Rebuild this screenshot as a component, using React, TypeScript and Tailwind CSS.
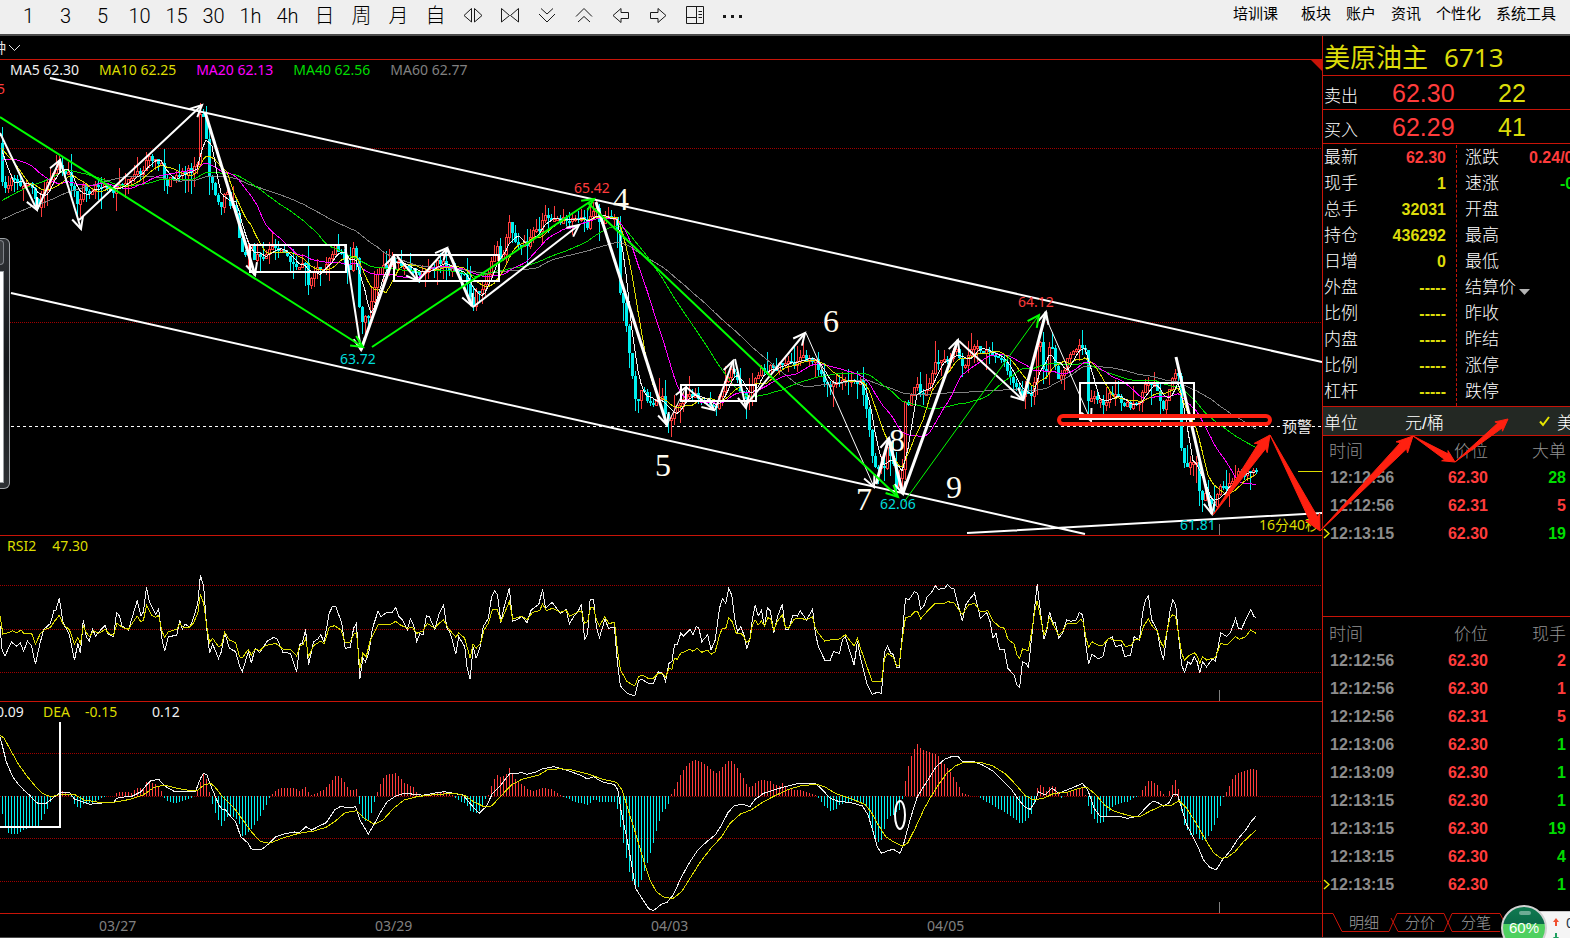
import type { ReactNode } from "react";

type Point = [number, number];

/* ================= DATA ================= */
const PERIODS = ["1", "3", "5", "10", "15", "30", "1h", "4h", "日", "周", "月", "自"];
const MENU = ["板块", "账户", "资讯", "个性化", "系统工具"];

const QUOTE_LEFT = [
  { label: "最新", value: "62.30", color: "text-[#ff3c3c]" },
  { label: "现手", value: "1", color: "text-[#dcdc0a]" },
  { label: "总手", value: "32031", color: "text-[#dcdc0a]" },
  { label: "持仓", value: "436292", color: "text-[#dcdc0a]" },
  { label: "日增", value: "0", color: "text-[#dcdc0a]" },
  { label: "外盘", value: "-----", color: "text-[#dcdc0a]" },
  { label: "比例", value: "-----", color: "text-[#dcdc0a]" },
  { label: "内盘", value: "-----", color: "text-[#dcdc0a]" },
  { label: "比例", value: "-----", color: "text-[#dcdc0a]" },
  { label: "杠杆", value: "-----", color: "text-[#dcdc0a]" },
];

const QUOTE_RIGHT = ["涨跌", "速涨", "开盘", "最高", "最低", "结算价", "昨收", "昨结", "涨停", "跌停"];

const BIG_ORDERS = [
  { time: "12:12:56", price: "62.30", volume: "28", up: false },
  { time: "12:12:56", price: "62.31", volume: "5", up: true },
  { time: "12:13:15", price: "62.30", volume: "19", up: false },
];

const TICKS = [
  { time: "12:12:56", price: "62.30", volume: "2", up: true },
  { time: "12:12:56", price: "62.30", volume: "1", up: true },
  { time: "12:12:56", price: "62.31", volume: "5", up: true },
  { time: "12:13:06", price: "62.30", volume: "1", up: false },
  { time: "12:13:09", price: "62.30", volume: "1", up: false },
  { time: "12:13:15", price: "62.30", volume: "1", up: false },
  { time: "12:13:15", price: "62.30", volume: "19", up: false },
  { time: "12:13:15", price: "62.30", volume: "4", up: false },
  { time: "12:13:15", price: "62.30", volume: "1", up: false },
];

// turning points of the close, in chart coordinates
const CLOSES =
  "-180,268 -90,240 -60,235 -50,180 -20,145 0,143 2,183 5,188 10,181 14,176 17,182 24,185 30,182 35,198 37,207 42,192 49,180 54,173 60,164 68,175 73,190 77,205 81,200 84,182 89,196 93,188 98,187 108,186 113,190 118,180 125,185 135,176 144,171 147,152 150,158 156,162 160,160 165,186 169,180 176,178 181,169 186,173 194,168 198,158 200,114 203,116 205,127 207,155 210,190 213,183 216,200 220,211 222,200 226,186 230,206 235,210 238,226 241,253 244,257 247,247 251,247 253,260 257,251 262,256 267,251 275,246 282,252 289,258 297,270 304,258 308,283 313,276 318,267 325,265 330,253 335,247 340,253 345,262 350,268 353,245 357,263 360,333 363,317 367,320 370,308 372,293 375,283 379,265 385,267 392,262 397,262 404,267 411,270 417,275 423,268 431,267 443,260 450,270 456,274 465,278 468,292 473,303 475,292 480,297 485,283 489,273 492,255 497,247 501,262 506,238 510,218 513,245 518,243 527,243 532,233 539,230 544,217 549,220 555,218 569,222 583,220 587,225 591,210 596,208 600,223 606,212 611,218 616,218 618,243 620,293 623,303 627,333 630,360 635,398 638,398 641,387 645,390 648,402 653,405 657,395 662,397 666,423 670,417 673,413 677,403 682,397 693,395 703,398 710,405 715,408 720,393 727,378 732,367 737,382 740,390 745,397 750,393 755,377 760,370 765,373 770,368 775,373 780,365 785,360 790,365 797,360 803,358 808,362 815,358 818,368 823,383 828,383 833,382 845,378 853,385 860,382 865,403 868,427 871,443 873,467 878,465 883,470 887,450 892,457 896,487 898,480 902,467 905,405 910,400 913,385 918,385 922,395 927,387 932,370 937,360 943,363 950,355 957,352 960,363 965,362 968,352 975,348 982,352 990,353 997,360 1005,365 1010,377 1017,387 1022,395 1027,392 1032,393 1035,373 1038,328 1042,353 1044,383 1050,343 1054,360 1058,378 1063,373 1068,355 1075,353 1080,347 1086,352 1088,403 1092,395 1097,403 1103,403 1112,393 1118,397 1125,405 1132,405 1140,402 1147,380 1157,388 1163,410 1170,387 1175,370 1179,375 1181,447 1185,468 1190,460 1197,460 1200,502 1206,493 1211,505 1216,503 1219,483 1226,487 1236,473 1243,478 1253,468 1256,471";

// indicator samples: each list is split in two halves, the second one starts at x = 650
const RSI_FAST = [
  "0,258 5,330 12,347 27,306 40,319 48,308 56,334 65,303 75,318 84,373 95,310 104,268 120,250 128,212 133,210 141,175 150,248 165,285 177,360 185,310 191,340 198,240 205,290 212,303 220,268 227,288 245,262 250,256 255,280 270,290 277,218 284,228 290,258 305,270 326,182 335,228 341,215 348,142 355,185 370,222 377,207 384,290 391,334 400,290 420,286 427,240 433,268 440,252 450,262 458,240 470,190 476,106 484,140 491,265 498,340 505,312 519,355 526,335 534,278 545,325 560,335 569,378 576,394 590,335 597,370 606,325 617,338 635,303 650,292 658,296 672,337 690,340 705,395 712,313 718,310 726,268 733,376 745,305 755,297 762,284 770,306 782,220 790,199 798,200 812,250 820,325 832,322 840,265 847,250 855,418 862,355 868,365 876,340 885,265 898,214 905,230 918,218 932,217 940,203 948,230 955,238 968,268 975,236 983,258 990,304 998,280 1005,285 1013,228 1020,230 1033,268 1043,222 1054,196 1062,265 1070,280 1083,342 1090,290 1104,320 1110,385 1117,418 1124,320 1131,354 1140,325 1148,260 1160,235 1168,170 1175,153 1182,165 1190,248 1197,205 1210,145 1218,243 1230,238 1240,228 1252,248 1262,210 1280,193 1289,148 1296,205 1312,187 1325,210 1332,220 1345,208 1353,252 1362,232 1375,210 1381,192 1389,300 1396,280 1402,180 1410,178 1417,260 1424,293 1437,238 1446,265 1460,262 1467,370 1474,438 1490,460 1508,468 1517,422 1525,418 1540,430",
  "0,430 8,430 20,395 30,400 37,425 45,370 52,365 58,315 65,313 73,280 80,288 95,268 102,284 110,260 116,264 123,305 137,284 145,330 155,300 165,205 172,175 180,190 187,145 194,165 202,240 208,275 216,260 223,285 230,325 237,300 243,240 250,195 257,228 265,210 272,262 279,203 286,212 294,278 303,230 314,193 322,268 329,268 340,225 350,228 357,213 372,240 386,207 393,280 400,320 415,360 428,360 436,335 450,340 457,300 464,290 485,375 493,303 500,355 515,430 528,463 540,457 550,460 557,335 564,318 572,340 578,343 586,382 592,383 600,275 607,175 615,180 628,155 636,160 643,208 650,200 658,172 670,155 678,138 685,148 700,145 707,133 715,145 722,145 735,210 742,244 750,195 757,182 771,160 785,235 800,218 808,245 815,295 822,280 830,327 842,330 850,385 865,405 872,435 878,443 885,365 893,370 899,382 906,300 914,200 920,133 928,220 936,298 943,270 949,215 957,250 963,247 971,295 980,280 990,240 1000,244 1013,240 1020,217 1028,225 1035,310 1042,372 1050,342 1065,357 1076,350 1085,300 1098,290 1106,320 1120,315 1128,350 1142,345 1150,290 1163,300 1170,220 1177,180 1184,167 1192,240 1205,270 1213,330 1220,360 1228,280 1235,215 1242,180 1249,195 1256,290 1263,375 1270,397 1278,365 1285,373 1293,350 1300,365 1306,400 1313,365 1322,380 1336,357 1343,363 1350,320 1356,278 1370,290 1380,275 1391,235 1398,265 1405,267 1415,240 1427,208 1435,230 1440,233",
];
const RSI_SLOW = [
  "0,228 7,282 20,278 30,272 40,278 50,270 58,282 75,280 84,313 95,283 104,270 120,262 128,246 141,226 150,252 165,270 177,312 185,293 191,310 198,258 206,280 213,290 222,272 235,280 250,268 258,280 270,286 278,250 290,262 305,268 326,228 335,246 341,240 348,196 360,225 370,232 377,225 384,270 391,292 400,275 420,268 427,250 437,264 450,262 460,248 470,220 476,163 484,190 491,260 498,308 505,295 519,320 526,315 534,277 545,300 560,308 569,350 576,353 590,328 597,345 606,327 617,332 630,317 655,310 672,327 690,328 705,348 712,318 720,314 726,295 733,350 745,317 762,303 770,312 782,262 795,257 810,270 820,307 832,306 840,283 847,278 855,385 862,340 870,350 880,300 898,254 930,252 940,244 950,254 968,265 980,262 990,280 1005,273 1015,250 1033,265 1043,250 1054,240 1065,265 1083,292 1090,278 1104,295 1117,355 1124,312 1131,325 1142,310 1150,270 1160,250 1170,208 1182,210 1190,245 1200,215 1210,185 1218,237 1240,228 1252,240 1265,217 1282,212 1289,192 1298,212 1312,205 1332,217 1345,210 1353,228 1381,212 1389,250 1396,245 1403,203 1410,203 1417,238 1424,258 1437,230 1446,250 1460,248 1467,330 1474,390 1490,425 1508,438 1517,410 1525,405 1540,415",
  "0,415 8,415 20,400 30,400 37,412 45,385 52,388 58,355 65,358 73,340 95,328 102,334 112,325 123,337 137,330 145,343 155,335 165,285 172,265 180,265 187,233 195,245 205,280 216,280 223,290 230,307 237,300 243,255 250,240 257,255 265,243 272,258 280,233 287,237 294,270 303,243 314,225 322,262 329,265 342,238 357,234 372,240 386,230 393,265 400,280 415,303 436,298 450,297 464,284 485,318 493,295 500,325 515,378 528,425 550,425 557,355 564,340 578,352 586,378 592,375 600,290 607,232 618,230 630,214 636,215 643,236 660,212 678,190 700,190 707,185 722,188 735,212 742,223 757,195 771,190 785,215 803,212 815,243 830,260 842,265 850,297 865,312 872,345 878,355 885,327 899,332 906,280 914,215 920,182 928,235 936,285 943,262 949,230 957,252 971,285 980,275 990,252 1013,250 1024,238 1030,248 1035,290 1042,322 1050,305 1065,316 1076,315 1090,295 1110,303 1120,302 1130,320 1143,316 1152,298 1163,300 1172,260 1184,237 1195,262 1205,272 1213,305 1220,322 1228,275 1235,235 1242,224 1249,230 1256,285 1263,340 1270,360 1280,347 1293,338 1300,348 1306,370 1313,350 1322,360 1336,355 1343,353 1350,330 1356,310 1370,315 1391,290 1400,298 1415,290 1427,270 1440,280",
];
const DIF = [
  "0,590 8,630 15,665 30,710 45,735 58,752 70,765 80,780 90,790 110,790 130,770 145,757 165,757 177,778 195,785 213,793 232,790 270,787 277,775 300,770 315,768 335,755 348,735 358,722 377,718 390,737 412,753 430,756 465,753 477,713 484,700 492,705 500,735 520,795 528,808 536,810 545,825 560,845 572,890 590,910 597,927 622,928 640,910 655,890 675,882 700,876 712,877 727,860 740,870 762,856 775,848 795,810 808,800 835,803 845,800 855,840 875,882 890,850 905,815 920,785 940,768 960,760 985,763 1005,766 1030,760 1055,755 1070,758 1100,765 1120,795 1138,820 1155,800 1170,760 1190,735 1210,702 1240,698 1253,703 1275,695 1290,686 1315,680 1345,690 1380,706 1395,717 1410,710 1430,725 1460,734 1468,750 1475,810 1490,900 1500,970 1510,1045 1525,1075 1540,1103",
  "0,1108 8,1112 30,1090 40,1088 55,1065 75,1010 95,965 115,928 135,905 155,885 170,855 185,818 200,797 220,793 237,800 250,778 270,760 300,748 320,740 350,731 393,730 410,750 428,775 450,785 475,787 505,798 518,825 530,875 540,920 550,940 565,932 578,928 594,940 603,910 620,830 635,770 650,740 665,710 680,680 700,658 720,648 732,650 743,665 770,665 790,675 815,693 835,718 858,747 875,778 890,800 903,808 915,785 923,755 938,765 955,745 972,760 990,750 1010,740 1027,730 1040,750 1055,805 1070,830 1090,830 1110,828 1135,835 1160,828 1180,800 1195,783 1205,787 1220,798 1233,788 1243,765 1253,763 1262,800 1275,855 1288,885 1300,915 1315,960 1330,982 1345,990 1360,960 1380,930 1395,900 1415,870 1428,845 1440,828",
];
const DEA = [
  "0,585 10,595 25,630 45,675 65,710 85,740 100,760 120,770 150,762 175,762 200,780 235,787 270,787 310,778 340,765 365,743 390,735 420,745 445,750 470,750 485,735 500,730 510,740 530,772 560,810 580,845 600,880 620,905 640,910 670,895 710,880 745,873 775,862 795,845 820,818 847,812 865,835 890,853 910,840 935,805 960,780 990,770 1030,764 1080,760 1105,767 1125,785 1150,800 1168,798 1190,768 1215,735 1240,718 1280,705 1300,690 1330,686 1360,690 1400,703 1430,717 1465,727 1478,750 1490,800 1510,880 1530,965 1540,1005",
  "0,1020 15,1055 35,1073 55,1075 75,1055 95,1015 120,965 145,925 170,890 190,850 215,822 240,810 270,785 300,765 330,748 360,737 395,733 415,740 440,760 475,775 510,793 525,815 540,850 560,890 580,907 600,918 612,910 630,865 650,810 665,775 685,735 705,700 725,678 745,667 785,667 815,678 845,702 870,735 890,765 910,780 935,775 960,760 990,757 1020,745 1038,742 1060,765 1080,795 1100,812 1125,822 1145,829 1165,829 1190,812 1215,798 1240,795 1257,782 1275,805 1300,855 1320,900 1340,940 1357,955 1372,952 1390,935 1410,905 1440,870",
];
const HISTOGRAM = [
  "0,769 5,825 13,862 20,882 40,883 56,868 75,862 90,858 98,840 105,820 115,800 122,775 130,769 141,758 150,751 160,760 168,768 172,785 182,800 191,803 198,792 213,790 227,785 240,775 250,769 270,769 277,757 300,757 312,758 326,742 341,745 348,722 362,728 377,740 384,757 390,775 400,787 420,789 440,780 455,774 465,765 470,745 477,718 483,700 490,720 497,760 503,790 512,825 526,860 535,835 545,828 560,835 569,855 576,895 583,885 597,865 610,845 620,822 630,800 640,770 650,757 662,744 700,745 712,755 726,738 735,765 750,760 770,748 782,730 797,705 812,715 825,742 835,752 847,748 854,800 860,835 868,845 876,842 885,805 892,770 900,740 912,708 925,702 940,700 950,712 960,730 980,740 990,758 1000,764 1020,762 1050,755 1070,762 1080,772 1090,782 1105,790 1118,815 1131,818 1140,810 1150,780 1160,765 1167,735 1175,715 1182,703 1190,715 1197,705 1203,700 1210,682 1218,702 1225,722 1240,732 1255,750 1270,752 1290,742 1310,748 1325,762 1335,770 1345,775 1365,785 1396,795 1410,777 1424,787 1440,785 1460,785 1467,810 1474,870 1481,915 1488,960 1495,1000 1502,1025 1510,1050 1517,1040 1524,1015 1532,985 1540,960",
  "0,940 8,905 15,870 23,835 30,810 40,805 47,770 58,745 65,722 73,700 87,675 100,663 110,660 130,672 145,690 158,700 172,680 187,662 194,663 202,675 215,700 230,735 237,745 250,727 265,720 285,723 295,735 305,738 314,730 325,745 345,750 365,752 380,760 393,765 400,775 415,800 428,812 440,808 450,795 470,785 485,783 500,785 513,800 522,850 530,890 543,907 550,900 557,860 565,830 578,825 586,815 594,808 600,770 607,715 614,672 621,645 628,625 635,612 642,625 657,635 680,642 693,665 707,685 722,715 735,742 742,760 757,766 780,769 790,780 810,792 825,805 850,822 865,835 878,852 893,842 906,820 914,785 920,740 928,733 942,755 949,737 963,740 970,762 978,777 990,755 1005,750 1020,745 1030,745 1035,775 1042,805 1050,830 1063,850 1076,845 1085,825 1098,800 1115,790 1135,785 1148,772 1163,768 1170,748 1184,722 1192,722 1205,737 1213,755 1222,768 1228,768 1235,745 1248,720 1256,755 1263,830 1270,860 1285,888 1300,882 1306,902 1315,900 1328,885 1342,850 1348,830 1356,790 1362,769 1370,752 1384,715 1391,702 1405,697 1415,692 1427,687 1441,690",
];

/* ================= HELPERS ================= */
const parse = (s: string): Point[] => s.split(" ").map((p) => p.split(",").map(Number) as Point);

const expand = (halves: string[]): Point[] =>
  halves.flatMap((half, i) =>
    parse(half).map(([x, y]) => [i * 650 + (x * 660) / 1568, 540 + y / 3] as Point)
  );

const toPoints = (list: Point[]) => list.map(([x, y]) => `${x.toFixed(1)},${y.toFixed(1)}`).join(" ");

function valueAt(list: Point[], x: number) {
  const i = list.findIndex((p) => p[0] >= x);
  if (i < 0) return list[list.length - 1][1];
  if (i === 0) return list[0][1];
  const [x0, y0] = list[i - 1];
  const [x1, y1] = list[i];
  return x1 === x0 ? y1 : y0 + ((y1 - y0) * (x - x0)) / (x1 - x0);
}

// small repeatable generator, so the wicks are the same on every render
let seed = 7;
const random = () => {
  seed = (seed * 16807) % 2147483647;
  return seed / 2147483647;
};

const STEP = 3;
const HISTORY = 60;
const BARS = 419;
const closeCurve = parse(CLOSES);
const closes = Array.from({ length: HISTORY + BARS }, (_, i) => {
  const x = (i - HISTORY) * STEP + 2;
  return valueAt(closeCurve, x) + (random() - 0.5) * 7;
});

const candles = Array.from({ length: BARS }, (_, i) => {
  const open = closes[i + HISTORY - 1];
  const close = closes[i + HISTORY];
  const top = Math.round(Math.min(open, close));
  const bottom = Math.max(top + 2, Math.round(Math.max(open, close)));
  const high = Math.round(top - random() * random() * 22);
  const low = Math.round(bottom + random() * random() * 24);
  return { x: i * STEP + 2, top, bottom, high, low, up: close < open };
});

const average = (n: number): Point[] =>
  Array.from({ length: BARS }, (_, i) => {
    const end = i + HISTORY + 1;
    const part = closes.slice(Math.max(0, end - n), end);
    return [i * STEP + 2, part.reduce((a, b) => a + b, 0) / part.length];
  });

const MA_LINES = [
  { n: 60, color: "#808080" },
  { n: 40, color: "#00dc00" },
  { n: 20, color: "#ff00ff" },
  { n: 10, color: "#dcdc00" },
  { n: 5, color: "#f0f0f0" },
].map((l) => ({ ...l, points: toPoints(average(l.n)) }));

const histogramCurve = expand(HISTOGRAM);
const histogram = Array.from({ length: BARS }, (_, i) => ({
  x: i * STEP + 2,
  y: Math.round(valueAt(histogramCurve, i * STEP + 2)),
}));

/* ================= CHART PARTS ================= */
function Grid({ rows }: { rows: number[] }) {
  return (
    <>
      {rows.map((y) => (
        <line key={y} x1="0" x2="1322" y1={y + 0.5} y2={y + 0.5} stroke="#a00000" strokeDasharray="1 1" />
      ))}
    </>
  );
}

function Arrow({ from, to, color = "#fff", width = 2 }: { from: Point; to: Point; color?: string; width?: number }) {
  const a = Math.atan2(to[1] - from[1], to[0] - from[0]);
  const wing = (d: number) => `${to[0] - 13 * Math.cos(a + d)},${to[1] - 13 * Math.sin(a + d)}`;
  return (
    <g fill="none" stroke={color}>
      <line x1={from[0]} y1={from[1]} x2={to[0]} y2={to[1]} strokeWidth={width} />
      <polyline points={`${wing(0.45)} ${to[0]},${to[1]} ${wing(-0.45)}`} strokeWidth="2" />
    </g>
  );
}

// tapered arrow: thin tail, thick neck, swept-back head
function BrushArrow({ from, to, size }: { from: Point; to: Point; size: number }) {
  const a = Math.atan2(to[1] - from[1], to[0] - from[0]);
  const at = (back: number, side: number) =>
    `${to[0] - back * Math.cos(a) - side * Math.sin(a)},${to[1] - back * Math.sin(a) + side * Math.cos(a)}`;
  return (
    <polygon
      fill="#ff2010"
      stroke="#ff2010"
      strokeLinejoin="round"
      points={`${from[0]},${from[1]} ${at(size * 1.7, size * 0.55)} ${at(size * 2, size)} ${at(0, 0)} ${at(size * 2, -size)} ${at(size * 1.7, -size * 0.55)}`}
    />
  );
}

const WHITE_ARROWS: [Point, Point, number][] = [
  [[0, 133], [37, 210], 2],
  [[37, 210], [60, 160], 2],
  [[60, 160], [81, 229], 2],
  [[79, 220], [202, 105], 2],
  [[205, 112], [255, 275], 3],
  [[345, 245], [361, 350], 2],
  [[361, 350], [394, 256], 3],
  [[397, 256], [418, 281], 2],
  [[418, 281], [447, 248], 2],
  [[447, 248], [472, 306], 3],
  [[473, 307], [579, 225], 2],
  [[596, 202], [667, 425], 3],
  [[667, 425], [686, 387], 1],
  [[686, 387], [714, 410], 2],
  [[715, 410], [733, 361], 2],
  [[735, 359], [746, 408], 2],
  [[746, 405], [805, 333], 2],
  [[806, 333], [874, 487], 1],
  [[876, 484], [889, 438], 3],
  [[889, 440], [903, 494], 3],
  [[903, 493], [958, 340], 3],
  [[959, 341], [1023, 400], 2],
  [[1023, 400], [1046, 312], 3],
  [[1046, 318], [1091, 421], 1],
  [[1176, 357], [1212, 514], 3],
];

const COUNTS: [string, number, number][] = [
  ["4", 613, 210],
  ["5", 655, 476],
  ["6", 823, 332],
  ["7", 856, 510],
  ["8", 889, 451],
  ["9", 946, 498],
];

function PriceChart() {
  return (
    <svg viewBox="0 80 1322 455" className="block w-full overflow-visible" role="img" aria-label="K线">
      <g shapeRendering="crispEdges">
        <Grid rows={[148, 322]} />
        <line x1="11" x2="1282" y1="426.5" y2="426.5" stroke="#fff" strokeDasharray="3 3" />
        <line x1="1312" x2="1322" y1="426.5" y2="426.5" stroke="#fff" strokeDasharray="3 3" />
        {candles.map((c) =>
          c.up ? (
            <g key={c.x} fill="none" stroke="#ff3c3c">
              <path d={`M${c.x + 0.5} ${c.high}V${c.top}M${c.x + 0.5} ${c.bottom}V${c.low}`} />
              <rect x={c.x - 0.5} y={c.top + 0.5} width="2" height={c.bottom - c.top} />
            </g>
          ) : (
            <g key={c.x} fill="#00f0f0">
              <rect x={c.x} y={c.high} width="1" height={c.low - c.high} />
              <rect x={c.x - 1} y={c.top} width="3" height={c.bottom - c.top} />
            </g>
          )
        )}
        {MA_LINES.map((l) => (
          <polyline key={l.n} points={l.points} fill="none" stroke={l.color} />
        ))}
        <path d="M1298 471.5H1322" stroke="#dcdc00" />
        <path d="M1219.5 524V535" stroke="#808080" />
      </g>

      <g stroke="#fff" strokeWidth="2" fill="none">
        <path d="M50 78L1322 362M11 293L1085 534M967 533L1322 513" />
        <rect x="250" y="245" width="96" height="27" />
        <rect x="394" y="255" width="105" height="26" />
        <rect x="681" y="385" width="75" height="16" />
        <rect x="1080" y="383" width="114" height="36" />
      </g>
      {WHITE_ARROWS.map(([from, to, w], i) => (
        <Arrow key={i} from={from} to={to} width={w} />
      ))}
      <Arrow from={[0, 117]} to={[363, 347]} color="#00ff00" />
      <Arrow from={[372, 347]} to={[594, 199]} color="#00ff00" />
      <Arrow from={[588, 203]} to={[898, 497]} color="#00ff00" />
      <Arrow from={[904, 502]} to={[1039, 315]} color="#00ff00" width={1} />

      <g className="font-['Noto_Sans','Noto_Sans_CJK_SC',sans-serif] text-sm">
        <text x="-3" y="94" fill="#ff3c3c">5</text>
        <text x="574" y="193" fill="#ff3c3c">65.42</text>
        <text x="1018" y="307" fill="#ff3c3c">64.12</text>
        <text x="340" y="364" fill="#00dcdc">63.72</text>
        <text x="880" y="509" fill="#00dcdc">62.06</text>
        <text x="1180" y="530" fill="#00dcdc">61.81</text>
        <text x="1259" y="530" fill="#dcdc00">16分40秒</text>
        <text x="1282" y="432" fill="#f0f0f0" className="text-[15px]">预警</text>
      </g>
      <g className="font-['Liberation_Serif',serif] text-[32px]" fill="#fffdf0">
        {COUNTS.map(([n, x, y]) => (
          <text key={n} x={x} y={y}>{n}</text>
        ))}
      </g>
    </svg>
  );
}

function RsiChart() {
  return (
    <svg viewBox="0 556 1322 145" className="block w-full" role="img" aria-label="RSI">
      <g shapeRendering="crispEdges" fill="none">
        <Grid rows={[585, 629, 672]} />
        <polyline points={toPoints(expand(RSI_FAST))} stroke="#f0f0f0" />
        <polyline points={toPoints(expand(RSI_SLOW))} stroke="#dcdc00" />
        <path d="M1219.5 690V701" stroke="#808080" />
      </g>
    </svg>
  );
}

function MacdChart() {
  return (
    <svg viewBox="0 722 1322 191" className="block w-full" role="img" aria-label="MACD">
      <g shapeRendering="crispEdges" fill="none">
        <Grid rows={[753, 796, 838, 881]} />
        {histogram.map((b) =>
          b.y === 796 ? null : (
            <line key={b.x} x1={b.x + 0.5} x2={b.x + 0.5} y1="796" y2={b.y} stroke={b.y < 796 ? "#ff3c3c" : "#00f0f0"} />
          )
        )}
        <polyline points={toPoints(expand(DIF))} stroke="#f0f0f0" />
        <polyline points={toPoints(expand(DEA))} stroke="#dcdc00" />
        <path d="M1219.5 902V913" stroke="#808080" />
      </g>
      <path d="M60 722V827H0" stroke="#fff" strokeWidth="2" fill="none" />
      <ellipse cx="900" cy="815" rx="5" ry="14" stroke="#fff" strokeWidth="2" fill="none" />
    </svg>
  );
}

/* ================= TOOLBAR ================= */
function ToolIcon({ label, children }: { label: string; children: ReactNode }) {
  return (
    <button type="button" aria-label={label} className="flex w-[37px] items-center justify-center">
      <svg width="20" height="20" viewBox="0 0 20 20" fill="none" stroke="#1a1a1a">
        {children}
      </svg>
    </button>
  );
}

function Toolbar() {
  return (
    <header className="flex h-9 items-center justify-between overflow-hidden border-b-2 border-[#4b4b4b] bg-[#efefef] text-black">
      <div className="relative flex h-full items-center pl-[10px] pb-1">
        <span className="absolute -left-3 text-[20px] font-bold">0</span>
        {PERIODS.map((p) => (
          <button
            key={p}
            type="button"
            className="w-[37px] pt-px text-center font-['Roboto','Noto_Sans_CJK_SC',sans-serif] text-[20px] font-light leading-6"
          >
            {p}
          </button>
        ))}
        <ToolIcon label="缩小">
          <path d="M8.500 3.500V17L1 10.500ZM11.500 3.500V17L19 10.500Z" />
        </ToolIcon>
        <ToolIcon label="放大">
          <path d="M1.500 3.500V17L9.500 10.500ZM18.500 3.500V17L10.500 10.500Z" />
        </ToolIcon>
        <ToolIcon label="向下">
          <path d="M4 3.500L10 9L16 3.500M2 9L10 17L18 9" />
        </ToolIcon>
        <ToolIcon label="向上">
          <path d="M2 11.500L10 3.500L18 11.500M4 17L10 11.500L16 17" />
        </ToolIcon>
        <ToolIcon label="左移">
          <path d="M2 10.500L10 3.500V7.500H17.500V13.500H10V17.500Z" />
        </ToolIcon>
        <ToolIcon label="右移">
          <path d="M18 10.500L10 3.500V7.500H2.500V13.500H10V17.500Z" />
        </ToolIcon>
        <ToolIcon label="布局">
          <path d="M1.500 1.500H18.500V18.500H1.500ZM11.500 1.500V18.500M1.500 12.500H11.500M13.500 6.500H17M13.500 9.500H17M13.500 12.500H17" />
        </ToolIcon>
        <ToolIcon label="更多">
          <path d="M1 11.500H4M9 11.500H12M17 11.500H20" strokeWidth="3" />
        </ToolIcon>
      </div>
      <nav className="flex gap-[15px] pr-[14px] pb-2 text-[15px] leading-5">
        <a href="#training" className="mr-2">培训课</a>
        {MENU.map((m) => (
          <a key={m} href={`#${m}`}>{m}</a>
        ))}
      </nav>
    </header>
  );
}

/* ================= QUOTE PANEL ================= */
interface Trade {
  time: string;
  price: string;
  volume: string;
  up: boolean;
}

function TradeTable({ last, rows }: { last: string; rows: Trade[] }) {
  return (
    <table className="w-full table-fixed border-collapse text-base font-bold leading-7">
      <thead>
        <tr className="h-7 text-[17px] text-[#929292]">
          <th className="w-[93px] pt-1 pl-[6px] text-left font-light leading-6">时间</th>
          <th className="w-[72px] pt-1 text-right font-light leading-6">价位</th>
          <th className="pt-1 pr-1 text-right font-light leading-6">{last}</th>
        </tr>
      </thead>
      <tbody>
        {rows.map((r, i) => (
          <tr key={i} className="h-7">
            <td className="relative p-0 pl-[7px] text-[#8c8c8c]">
              {i === rows.length - 1 && (
                <svg className="absolute top-2 left-0" width="7" height="11" viewBox="0 0 7 11" fill="none" stroke="#e6e600">
                  <path d="M1 1L6 5.500L1 10" strokeWidth="1.500" />
                </svg>
              )}
              {r.time}
            </td>
            <td className="p-0 text-right text-[#ff3c3c]">{r.price}</td>
            <td className={`p-0 pr-1 text-right ${r.up ? "text-[#ff3c3c]" : "text-[#00dc00]"}`}>{r.volume}</td>
          </tr>
        ))}
      </tbody>
    </table>
  );
}

function PriceRow({ label, price, volume }: { label: string; price: string; volume: string }) {
  return (
    <div className="flex h-[34px] items-center border-b border-[#c81408] pt-[2px] text-[25px]">
      <span className="w-[69px] pt-[6px] pl-px text-[17px] font-light">{label}</span>
      <span className="w-[106px] text-[#ff3c3c]">{price}</span>
      <span className="text-[#dcdc0a]">{volume}</span>
    </div>
  );
}

function QuotePanel() {
  return (
    <aside className="flex w-[248px] shrink-0 flex-col overflow-hidden whitespace-nowrap border-l border-[#c81408] font-['Liberation_Sans','Noto_Sans_CJK_SC',sans-serif] text-white">
      <h1 className="flex h-10 items-center gap-4 border-b border-[#c81408] pt-[2px] pl-px font-['Noto_Sans','Noto_Sans_CJK_SC',sans-serif] text-[26px] leading-9 text-[#dcdc0a]">
        <span>美原油主</span>
        <span>6713</span>
      </h1>
      <PriceRow label="卖出" price="62.30" volume="22" />
      <PriceRow label="买入" price="62.29" volume="41" />

      <div className="flex h-[263px] border-b border-[#c81408] pt-px text-[17px] leading-[26px]">
        <dl className="w-[134px] shrink-0 border-r border-dashed border-[#c81408] pr-[10px] pl-px">
          {QUOTE_LEFT.map((q, i) => (
            <div key={i} className="flex h-[26px] justify-between">
              <dt className="font-light">{q.label}</dt>
              <dd className={`text-base font-bold leading-[26px] ${q.color}`}>{q.value}</dd>
            </div>
          ))}
        </dl>
        <dl className="shrink-0 pl-[8px]">
          {QUOTE_RIGHT.map((label) => (
            <div key={label} className="flex h-[26px] items-center">
              <dt className="w-16 shrink-0 font-light">{label}</dt>
              {label === "涨跌" && <dd className="text-base font-bold text-[#ff3c3c]">0.24/0.39%</dd>}
              {label === "速涨" && <dd className="pl-[31px] text-base font-bold text-[#00dc00]">-0.02%</dd>}
              {label === "结算价" && (
                <dd className="-ml-[10px] pt-2">
                  <svg width="11" height="6" viewBox="0 0 11 6">
                    <path d="M0 0H11L5.500 6Z" fill="#b4b4b4" />
                  </svg>
                </dd>
              )}
            </div>
          ))}
        </dl>
      </div>

      <div className="flex h-[29px] items-center border-b border-[#c81408] bg-[#232823] pt-[5px] pl-px text-[17px] leading-6 font-light">
        <span className="w-[81px] shrink-0">单位</span>
        <span className="w-[134px] shrink-0">元/桶</span>
        <svg className="mr-[7px] mb-1 shrink-0" width="11" height="11" viewBox="0 0 11 11" fill="none" stroke="#e6e600" strokeWidth="2">
          <path d="M1 5.500L4 9L10 1" />
        </svg>
        <span className="shrink-0">美原油</span>
      </div>

      <div className="h-[181px] border-b border-[#c81408]">
        <TradeTable last="大单" rows={BIG_ORDERS} />
      </div>
      <div className="h-[296px] pt-[2px]">
        <TradeTable last="现手" rows={TICKS} />
      </div>

      <div className="relative flex h-[19px] items-center pl-[13px] text-[15px] leading-[18px] font-light text-[#a0a0a0]">
        <svg className="absolute inset-0" width="248" height="19" viewBox="0 0 248 19" fill="none" stroke="#c81408">
          <path d="M0 .500H10L19 18.500H66L74 .500H121L129 18.500H177M68 5L75 18.500H121L129 .500H177L184 14" />
        </svg>
        <button type="button" className="relative w-14">明细</button>
        <button type="button" className="relative w-14">分价</button>
        <button type="button" className="relative w-14">分笔</button>
      </div>
    </aside>
  );
}

/* ================= OVERLAYS ================= */
function SideHandle() {
  return (
    <div className="absolute top-[238px] left-0 h-[251px] w-[10px] rounded-r-md border border-l-0 border-[#a0a4a8] bg-linear-to-b from-[#2e3134] via-[#15181b] to-[#2e3134]">
      <div className="mt-px h-[25px] w-1 rounded-r border border-l-0 border-[#80848a] bg-[#3a3d40]" />
      <div className="mt-[6px] h-[212px] w-1 border-y border-r border-[#9a9ea2] bg-white" />
    </div>
  );
}

function BrushMarks() {
  return (
    <svg className="pointer-events-none absolute top-0 left-0" width="1570" height="938" viewBox="0 0 1570 938" aria-hidden="true">
      <rect x="1059" y="416" width="211" height="8" rx="4" fill="none" stroke="#ff2010" strokeWidth="4" />
      <BrushArrow from={[1213, 515]} to={[1270, 435]} size={8} />
      <BrushArrow from={[1270, 435]} to={[1320, 531]} size={8} />
      <BrushArrow from={[1320, 531]} to={[1413, 436]} size={8} />
      <BrushArrow from={[1413, 436]} to={[1455, 462]} size={6} />
      <BrushArrow from={[1455, 462]} to={[1508, 419]} size={6} />
    </svg>
  );
}

function SpeedBall() {
  return (
    <div className="absolute right-0 -bottom-[13px] flex h-[46px] w-[69px] items-center">
      <div className="absolute top-[6px] right-0 h-10 w-12 border-t border-[#c8c8c8] bg-[#f5f5f5]" />
      <div className="relative flex size-[46px] items-center justify-center rounded-full border-2 border-[#d2d2d2] bg-linear-to-b from-[#0f7a50] from-0% via-[#0b6a48] via-40% to-[#4fd060] to-40% font-['Liberation_Sans',sans-serif] text-[15px] text-white">
        60%
        <span className="absolute top-1 left-4 h-1 w-3 rounded-full bg-white/40" />
      </div>
      <svg className="absolute top-[13px] right-0" width="20" height="30" viewBox="0 0 20 30">
        <path d="M6 0L9 4H7V8H5V4H3Z" fill="#f05030" />
        <path d="M5 15H7V19H9L6 23L3 19H5Z" fill="#20a060" />
      </svg>
      <span className="absolute top-2 -right-1 text-sm leading-5 text-[#234]">0</span>
    </div>
  );
}

/* ================= PAGE ================= */
export default function App() {
  return (
    <div className="relative min-h-screen overflow-hidden bg-black font-['Noto_Sans','Noto_Sans_CJK_SC',sans-serif]">
      <Toolbar />
      <div className="flex">
        <main className="min-w-0 flex-1 overflow-hidden text-sm leading-5">
          <div className="flex h-6 items-center overflow-hidden border-b border-[#c81408] text-[#e6e6e6]">
            <span className="-ml-2">钟</span>
            <svg className="ml-[2px]" width="13" height="8" viewBox="0 0 13 8" fill="none" stroke="#e6e6e6">
              <path d="M1 1L6.500 6.500L12 1" />
            </svg>
          </div>

          <section className="relative border-b border-[#c81408]">
            <div className="flex h-5 gap-5 pl-[10px]">
              <span className="text-[#f0f0f0]">MA5 62.30</span>
              <span className="text-[#dcdc00]">MA10 62.25</span>
              <span className="text-[#ff00ff]">MA20 62.13</span>
              <span className="text-[#00dc00]">MA40 62.56</span>
              <span className="text-[#808080]">MA60 62.77</span>
            </div>
            <svg className="absolute top-0 right-0" width="11" height="11" viewBox="0 0 11 11">
              <path d="M0 0H11V11Z" fill="#c81408" />
            </svg>
            <PriceChart />
          </section>

          <section className="border-b border-[#c81408]">
            <div className="flex h-5 gap-4 pl-[7px] text-[#dcdc00]">
              <span>RSI2</span>
              <span>47.30</span>
            </div>
            <RsiChart />
          </section>

          <section className="border-b border-[#c81408]">
            <div className="flex h-5 text-[#dcdc00]">
              <span className="-ml-1 w-[47px] text-[#f0f0f0]">0.09</span>
              <span className="w-[42px]">DEA</span>
              <span className="w-[67px]">-0.15</span>
              <span className="text-[#f0f0f0]">0.12</span>
            </div>
            <MacdChart />
          </section>

          <div className="flex h-[23px] items-center pl-[99px] text-[#808080]">
            <span className="w-[276px]">03/27</span>
            <span className="w-[276px]">03/29</span>
            <span className="w-[276px]">04/03</span>
            <span>04/05</span>
          </div>
        </main>
        <QuotePanel />
      </div>
      <div className="h-px bg-[#4b4b4b]" />
      <SideHandle />
      <BrushMarks />
      <SpeedBall />
    </div>
  );
}
